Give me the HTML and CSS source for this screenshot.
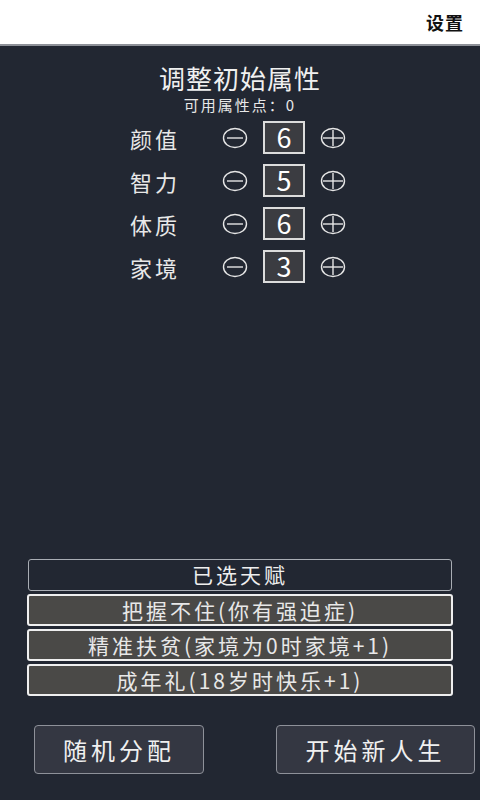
FILE: index.html
```html
<!DOCTYPE html>
<html lang="zh-CN">
<head>
    <meta charset="UTF-8">
    <meta name="viewport" content="width=device-width, initial-scale=1.0">
    <title>人生重开</title>
    <link rel="stylesheet" href="styles.css">
</head>
<body>
    <div class="topbar">
        <span class="settings">设置</span>
    </div>

    <div class="main">
        <h1>调整初始属性</h1>
        <div class="points">可用属性点：0</div>

        <div class="attrs">
            <div class="attr">
                <span class="attr-name">颜值</span>
                <svg class="step" viewBox="0 0 26 22"><ellipse cx="13" cy="11" rx="11.5" ry="9.5"/><line x1="5" y1="11" x2="21" y2="11"/></svg>
                <span class="attr-value">6</span>
                <svg class="step" viewBox="0 0 26 22"><ellipse cx="13" cy="11" rx="11.5" ry="9.5"/><line x1="3" y1="11" x2="23" y2="11"/><line x1="13" y1="3" x2="13" y2="19"/></svg>
            </div>
            <div class="attr">
                <span class="attr-name">智力</span>
                <svg class="step" viewBox="0 0 26 22"><ellipse cx="13" cy="11" rx="11.5" ry="9.5"/><line x1="5" y1="11" x2="21" y2="11"/></svg>
                <span class="attr-value">5</span>
                <svg class="step" viewBox="0 0 26 22"><ellipse cx="13" cy="11" rx="11.5" ry="9.5"/><line x1="3" y1="11" x2="23" y2="11"/><line x1="13" y1="3" x2="13" y2="19"/></svg>
            </div>
            <div class="attr">
                <span class="attr-name">体质</span>
                <svg class="step" viewBox="0 0 26 22"><ellipse cx="13" cy="11" rx="11.5" ry="9.5"/><line x1="5" y1="11" x2="21" y2="11"/></svg>
                <span class="attr-value">6</span>
                <svg class="step" viewBox="0 0 26 22"><ellipse cx="13" cy="11" rx="11.5" ry="9.5"/><line x1="3" y1="11" x2="23" y2="11"/><line x1="13" y1="3" x2="13" y2="19"/></svg>
            </div>
            <div class="attr">
                <span class="attr-name">家境</span>
                <svg class="step" viewBox="0 0 26 22"><ellipse cx="13" cy="11" rx="11.5" ry="9.5"/><line x1="5" y1="11" x2="21" y2="11"/></svg>
                <span class="attr-value">3</span>
                <svg class="step" viewBox="0 0 26 22"><ellipse cx="13" cy="11" rx="11.5" ry="9.5"/><line x1="3" y1="11" x2="23" y2="11"/><line x1="13" y1="3" x2="13" y2="19"/></svg>
            </div>
        </div>

        <!-- 已选天赋 -->
        <div class="talents">
            <div class="talent-head">已选天赋</div>
            <div class="talent">把握不住(你有强迫症)</div>
            <div class="talent">精准扶贫(家境为0时家境+1)</div>
            <div class="talent">成年礼(18岁时快乐+1)</div>
        </div>

        <div class="actions">
            <button class="btn btn-random">随机分配</button>
            <button class="btn btn-start">开始新人生</button>
        </div>
    </div>
</body>
</html>
```

FILE: styles.css
```css
* {
    box-sizing: border-box;
    margin: 0;
    padding: 0;
}
body {
    font-family: "Noto Sans CJK SC", "Noto Sans", sans-serif;
    background: #222732;
    color: #e8e8e8;
    height: 100vh;
    display: flex;
    flex-direction: column;
}
.topbar {
    height: 46px;
    background: #fff;
    border-bottom: 2px solid #8d9097;
    display: flex;
    justify-content: flex-end;
    align-items: center;
    padding-right: 16px;
}
.settings {
    font-size: 18px;
    font-weight: 700;
    color: #111;
    letter-spacing: 1px;
}
.main {
    flex: 1;
    display: flex;
    flex-direction: column;
    padding-top: 17px;
}
h1 {
    font-size: 26px;
    font-weight: 400;
    line-height: 30px;
    text-align: center;
    letter-spacing: 1px;
    color: #f0f0f0;
}
.points {
    font-size: 15px;
    line-height: 18px;
    margin-top: 3px;
    text-align: center;
    letter-spacing: 2px;
}
.attrs {
    margin-top: 7px;
    display: flex;
    flex-direction: column;
    gap: 10px;
}
.attr {
    display: flex;
    align-items: center;
    height: 33px;
    padding-left: 130px;
}
.attr-name {
    width: 92px;
    font-size: 22px;
    letter-spacing: 3px;
}
.step {
    width: 26px;
    height: 22px;
    fill: none;
    stroke: #e6e6e6;
    stroke-width: 1.4;
}
.attr-value {
    width: 42px;
    height: 33px;
    margin: 0 15px;
    background: #3b3c41;
    border: 2px solid #dcdcdc;
    font-size: 27px;
    line-height: 28px;
    text-align: center;
    color: #fff;
}
.talents {
    margin-top: auto;
    padding: 0 27px;
    display: flex;
    flex-direction: column;
    gap: 3px;
}
.talent-head,
.talent {
    height: 32px;
    border-radius: 3px;
    font-size: 21px;
    line-height: 28px;
    text-align: center;
    letter-spacing: 3px;
}
.talent-head {
    margin: 0 1px;
    border: 1.5px solid #a9adb4;
    color: #eee;
}
.talent {
    background: #4a4947;
    border: 2px solid #efefef;
}
.actions {
    display: flex;
    gap: 72px;
    padding: 29px 5px 26px 34px;
}
.btn {
    height: 49px;
    background: #343742;
    border: 1.5px solid #8e9199;
    border-radius: 4px;
    color: #f0f0f0;
    font-family: inherit;
    font-size: 24px;
    letter-spacing: 4px;
}
.btn-random {
    width: 170px;
}
.btn-start {
    width: 199px;
}
```
